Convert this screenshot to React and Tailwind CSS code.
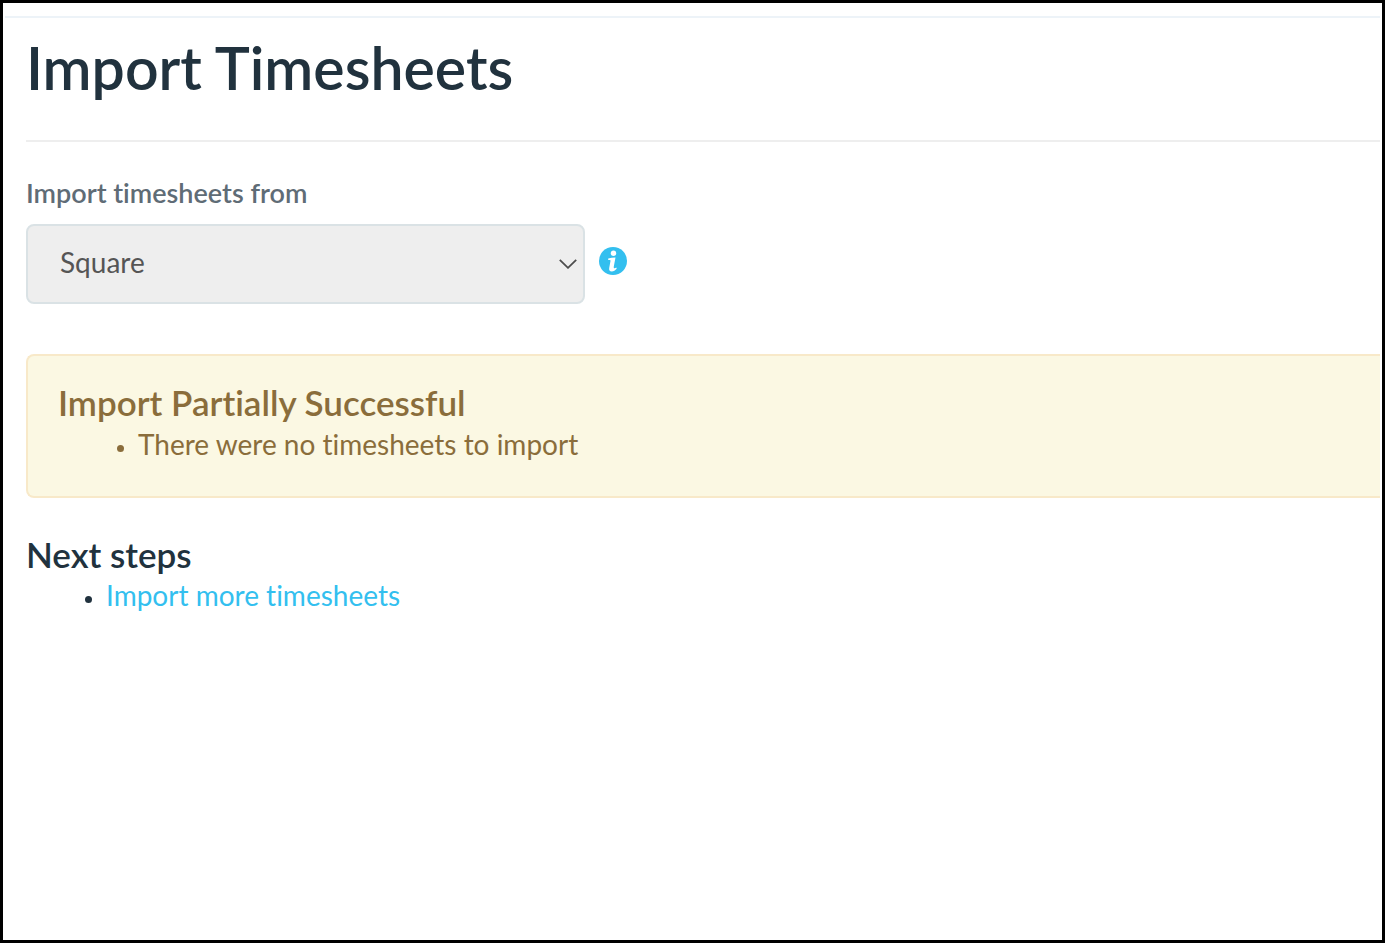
import React from "react";

function InfoIcon() {
  return (
    <svg viewBox="0 0 28 28" className="block size-7" aria-hidden="true">
      <circle cx="14" cy="14" r="14" fill="#33bfef" />
      <circle cx="14.5" cy="6.3" r="2.7" fill="#fff" />
      <path
        d="M9.2 11.4C11.4 11 13.8 10.6 16.5 10.5L14.8 19.4C14.6 20.6 14.8 21.2 15.5 21.2C16.1 21.2 16.6 20.9 17.3 20.5L17.7 21.8C16.3 23.4 14.6 24.4 12.8 24.4C10.6 24.4 9.8 23 10.2 20.9L11.5 14.1C11.6 13.2 11.3 12.9 10.5 12.9H9.2Z"
        fill="#fff"
      />
    </svg>
  );
}

export default function App() {
  return (
    <div className="min-h-screen border-3 border-black bg-white px-0.5 pt-[13px] font-[Lato,sans-serif] text-[#21323e] [font-variant-ligatures:none]">
      <main className="border-t-2 border-[#edf3f8] pt-[15px] pl-[21px]">
        <h1 className="border-b-2 border-[#eeeeee] pb-[37px] text-[59px] leading-[70px] font-semibold">
          Import Timesheets
        </h1>

        <form className="mt-[34px]">
          <label
            htmlFor="source"
            className="block text-[27px] leading-[34px] font-semibold text-[#5f6c76]"
          >
            Import timesheets from
          </label>
          <div className="mt-3.5 flex items-center gap-3.5">
            <div className="grid w-full max-w-[559px] items-center">
              <select
                id="source"
                disabled
                defaultValue="square"
                className="col-start-1 row-start-1 h-20 w-full appearance-none rounded-lg border-2 border-[#dae2e5] bg-[#eeeeee] px-8 pb-1 text-[28px] leading-[34px] text-[#555555] opacity-100"
              >
                <option value="square">Square</option>
              </select>
              <svg
                viewBox="0 0 18 10"
                className="pointer-events-none col-start-1 row-start-1 mr-2 h-2.5 w-[18px] justify-self-end"
                fill="none"
                stroke="#4d4d4d"
                strokeWidth="1.8"
                aria-hidden="true"
              >
                <path d="M.8 .8L9 8.8L17.2 .8" />
              </svg>
            </div>
            <button type="button" aria-label="About this import source" className="mb-1.5">
              <InfoIcon />
            </button>
          </div>
        </form>

        <section
          role="status"
          className="mt-[50px] rounded-l-lg border-2 border-r-0 border-[#f8e9c9] bg-[#fbf8e3] pt-[25px] pb-[35px] pl-[30px] text-[#8a6d3b]"
        >
          <h2 className="text-[35px] leading-[42px] font-semibold">Import Partially Successful</h2>
          <ul className="mt-1 list-disc pl-20 text-[28px] leading-[34px] marker:text-[22px]">
            <li>There were no timesheets to import</li>
          </ul>
        </section>

        <section className="mt-[35px]">
          <h2 className="text-[35px] leading-[42px] font-semibold">Next steps</h2>
          <ul className="mt-[3px] list-disc pl-20 text-[28px] leading-[34px] marker:text-[22px]">
            <li>
              <a href="#import" className="text-[#33bfef]">
                Import more timesheets
              </a>
            </li>
          </ul>
        </section>
      </main>
    </div>
  );
}
